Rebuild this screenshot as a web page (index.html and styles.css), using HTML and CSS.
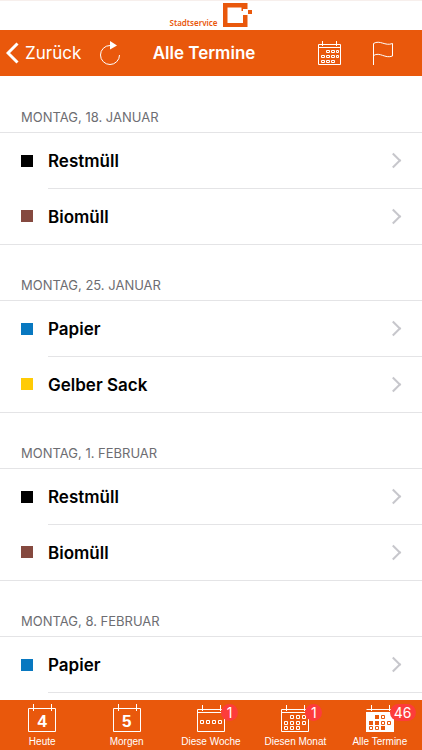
FILE: index.html
```
<!DOCTYPE html>
<html lang="de">
<head>
    <meta charset="UTF-8">
    <meta name="viewport" content="width=device-width, initial-scale=1.0">
    <title>Alle Termine</title>
    <link rel="stylesheet" href="styles.css">
</head>
<body>

    <!-- Logo -->
    <div class="brand">
        <span class="brand-name">Stadtservice</span>
        <svg class="brand-logo" width="30" height="26" viewBox="0 0 30 26">
            <path d="M24.500 7V1H0v24h24.500V13H20v8H4.500V5.500h14V9H20V7z" fill="#e9580c"/>
            <rect x="25" y="8" width="4" height="4" fill="#e9580c"/>
        </svg>
    </div>

    <!-- Navigation -->
    <header class="navbar">
        <div class="nav-side">
            <button class="back">
                <svg width="13" height="22" viewBox="0 0 13 22"><path d="M11.500 1.500L2 11l9.500 9.500" fill="none" stroke="#fff" stroke-width="3"/></svg>
                Zurück
            </button>
            <button aria-label="Aktualisieren">
                <svg width="22" height="26" viewBox="0 0 22 26">
                    <path d="M11 5.500A9.500 9.500 0 1 0 20.500 15" fill="none" stroke="#fff"/>
                    <path d="M11 1l7 4.500-7 4z" fill="#fff"/>
                </svg>
            </button>
        </div>
        <h1>Alle Termine</h1>
        <div class="nav-side nav-right">
            <button aria-label="Kalender">
                <svg width="24" height="26" viewBox="0 0 24 26" fill="none" stroke="#fff">
                    <path d="M.5 4.500h22v20H.5zM.5 7.500h22M4.500 1v5M18.500 1v5"/>
                    <path d="M8.500 10.500h3v2h-3zM13.500 10.500h3v2h-3zM18.500 10.500h2v2h-2zM3.500 15.500h3v2h-3zM8.500 15.500h3v2h-3zM13.500 15.500h3v2h-3zM18.500 15.500h2v2h-2zM3.500 20.500h3v2h-3zM8.500 20.500h3v2h-3zM13.500 20.500h3v2h-3z"/>
                </svg>
            </button>
            <button aria-label="Markieren">
                <svg width="22" height="26" viewBox="0 0 22 26" fill="none" stroke="#fff">
                    <path d="M1.500 25V3.500C8-.5 13 6.500 20.500 3.500v12.500C13 19 8 11.500 1.500 15.500"/>
                </svg>
            </button>
        </div>
    </header>

    <!-- Termine -->
    <main>
        <section>
            <h2>MONTAG, 18. JANUAR</h2>
            <ul>
                <li><a href="#"><span class="color black"></span><span class="name">Restmüll</span></a></li>
                <li><a href="#"><span class="color brown"></span><span class="name">Biomüll</span></a></li>
            </ul>
        </section>
        <section>
            <h2>MONTAG, 25. JANUAR</h2>
            <ul>
                <li><a href="#"><span class="color blue"></span><span class="name">Papier</span></a></li>
                <li><a href="#"><span class="color yellow"></span><span class="name">Gelber Sack</span></a></li>
            </ul>
        </section>
        <section>
            <h2>MONTAG, 1. FEBRUAR</h2>
            <ul>
                <li><a href="#"><span class="color black"></span><span class="name">Restmüll</span></a></li>
                <li><a href="#"><span class="color brown"></span><span class="name">Biomüll</span></a></li>
            </ul>
        </section>
        <section>
            <h2>MONTAG, 8. FEBRUAR</h2>
            <ul class="open">
                <li><a href="#"><span class="color blue"></span><span class="name">Papier</span></a></li>
            </ul>
        </section>
    </main>

    <!-- Tabs -->
    <nav class="tabbar">
        <a href="#">
            <span class="tab-icon">
                <svg width="28" height="29" viewBox="0 0 28 29" fill="none" stroke="#fff">
                    <path d="M.5 4.500h27v23H.5zM5.500 0v7M23.500 0v7"/>
                </svg>
                <b class="day">4</b>
            </span>
            Heute
        </a>
        <a href="#">
            <span class="tab-icon">
                <svg width="28" height="29" viewBox="0 0 28 29" fill="none" stroke="#fff">
                    <path d="M.5 4.500h27v23H.5zM5.500 0v7M23.500 0v7"/>
                </svg>
                <b class="day">5</b>
            </span>
            Morgen
        </a>
        <a href="#">
            <span class="tab-icon">
                <svg width="28" height="29" viewBox="0 0 28 29" fill="none" stroke="#fff">
                    <path d="M.5 5.500h27v22H.5zM.5 8.500h27M5.500 1v6M23.500 1v6"/>
                    <path d="M3.500 16.500h3v3h-3zM9.500 16.500h3v3h-3zM15.500 16.500h3v3h-3zM21.500 16.500h3v3h-3z"/>
                </svg>
                <span class="badge">1</span>
            </span>
            Diese Woche
        </a>
        <a href="#">
            <span class="tab-icon">
                <svg width="28" height="29" viewBox="0 0 28 29" fill="none" stroke="#fff">
                    <path d="M.5 5.500h27v22H.5zM.5 8.500h27M5.500 1v6M23.500 1v6"/>
                    <path d="M9.500 11.500h3v3h-3zM15.500 11.500h3v3h-3zM21.500 11.500h3v3h-3zM3.500 17.500h3v3h-3zM9.500 17.500h3v3h-3zM15.500 17.500h3v3h-3zM21.500 17.500h3v3h-3zM3.500 22.500h3v3h-3zM9.500 22.500h3v3h-3zM15.500 22.500h3v3h-3z"/>
                </svg>
                <span class="badge">1</span>
            </span>
            Diesen Monat
        </a>
        <a href="#" aria-current="page">
            <span class="tab-icon">
                <svg width="28" height="29" viewBox="0 0 28 29" fill="none" stroke="#fff">
                    <path d="M.5 5.500h27M5.500 1v6M23.500 1v6"/>
                    <path d="M0 8h28v20H0z" fill="#fff" stroke="none"/>
                    <path d="M9 11h4v4H9zM3 17h4v4H3zM9 17h4v4H9zM15 22h4v4h-4z" fill="#e9580c" stroke="none"/>
                    <path d="M15.500 11.500h3v3h-3zM15.500 17.500h3v3h-3zM21.500 17.500h3v3h-3zM3.500 22.500h3v3h-3zM9.500 22.500h3v3h-3z" stroke="#e9580c"/>
                </svg>
                <span class="badge">46</span>
            </span>
            Alle Termine
        </a>
    </nav>

</body>
</html>
```
FILE: styles.css
```
* {
    margin: 0;
    padding: 0;
    box-sizing: border-box;
}

body {
    font-family: Inter, "Liberation Sans", sans-serif;
    height: 100vh;
    display: flex;
    flex-direction: column;
    background-color: #fff;
    color: #000;
}

svg {
    display: block;
    flex: none;
}

a {
    color: inherit;
    text-decoration: none;
}

.brand {
    display: flex;
    justify-content: center;
    align-items: flex-end;
    gap: 5px;
    height: 30px;
    padding-bottom: 2px;
    border-top: 1px solid #f7efec;
    color: #e9580c;
}

.brand-name {
    font-family: "Noto Sans", sans-serif;
    font-size: 8px;
    font-weight: 600;
    line-height: 10px;
}

.navbar {
    display: flex;
    align-items: center;
    height: 46px;
    padding: 0 20px 0 6px;
    background-color: #e9580c;
    color: #fff;
}

.navbar h1 {
    font-size: 17px;
    font-weight: 600;
    white-space: nowrap;
}

.navbar button {
    display: flex;
    align-items: center;
    gap: 6px;
    border: none;
    background: none;
    color: #fff;
    font-family: inherit;
    font-size: 17px;
    cursor: pointer;
}

.nav-side {
    display: flex;
    flex: 1;
    gap: 18px;
}

.nav-right {
    justify-content: flex-end;
    gap: 30px;
}

.nav-right button:last-child {
    margin-right: 8px;
}

main {
    flex: 1;
    min-height: 0;
    padding-top: 1px;
    overflow-y: auto;
    scrollbar-width: none;
}

h2 {
    height: 55px;
    padding: 31px 21px 0;
    font-size: 13px;
    font-weight: normal;
    line-height: 18px;
    color: #6d6d72;
}

ul {
    list-style: none;
    border-top: 1px solid #e4e4e6;
    border-bottom: 1px solid #e4e4e6;
}

li {
    padding-left: 21px;
}

li a {
    display: flex;
    align-items: center;
}

.color {
    width: 12px;
    height: 12px;
    margin-right: 15px;
}

.black {
    background-color: #000;
}

.brown {
    background-color: #85493f;
}

.blue {
    background-color: #0878c0;
}

.yellow {
    background-color: #ffcb05;
}

.name {
    display: flex;
    flex: 1;
    justify-content: space-between;
    align-items: center;
    height: 55px;
    padding-right: 23px;
    font-size: 17px;
    font-weight: 600;
}

li + li .name {
    height: 56px;
    border-top: 1px solid #e4e4e6;
}

.open {
    border-bottom: none;
}

.open .name {
    height: 56px;
    border-bottom: 1px solid #e4e4e6;
}

/* disclosure arrow */
.name::after {
    content: "";
    width: 9px;
    height: 9px;
    border-top: 2px solid #c7c7cc;
    border-right: 2px solid #c7c7cc;
    transform: rotate(45deg);
}

.tabbar {
    display: flex;
    height: 50px;
    padding-top: 4px;
    background-color: #e9580c;
    color: #fff;
    font-family: "Liberation Sans", sans-serif;
    font-size: 10px;
    line-height: 12px;
}

.tabbar a {
    display: flex;
    flex: 1;
    flex-direction: column;
    align-items: center;
    gap: 3px;
    white-space: nowrap;
}

.tab-icon {
    position: relative;
}

.day {
    position: absolute;
    top: 9px;
    left: 0;
    width: 100%;
    font-size: 17px;
    line-height: 17px;
    text-align: center;
}

.badge {
    position: absolute;
    top: 0;
    left: 24px;
    min-width: 17px;
    padding: 0 4px;
    border-radius: 9px;
    background-color: #fd3c3b;
    font-family: Inter, sans-serif;
    font-size: 14px;
    line-height: 17px;
    text-align: center;
}
```
